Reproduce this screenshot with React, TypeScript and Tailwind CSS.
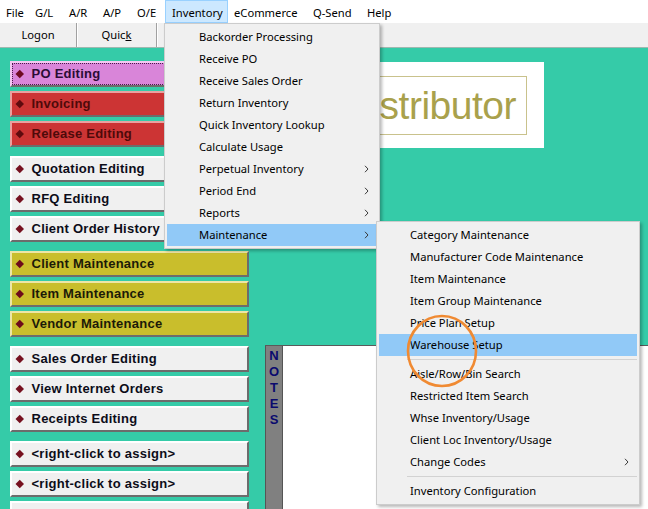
import React from "react";

type Tone = "pink" | "red" | "white" | "olive";

type Shortcut = { label: string; tone: Tone; focus?: boolean };

const shortcutGroups: Shortcut[][] = [
  [
    { label: "PO Editing", tone: "pink", focus: true },
    { label: "Invoicing", tone: "red" },
    { label: "Release Editing", tone: "red" },
  ],
  [
    { label: "Quotation Editing", tone: "white" },
    { label: "RFQ Editing", tone: "white" },
    { label: "Client Order History", tone: "white" },
  ],
  [
    { label: "Client Maintenance", tone: "olive" },
    { label: "Item Maintenance", tone: "olive" },
    { label: "Vendor Maintenance", tone: "olive" },
  ],
  [
    { label: "Sales Order Editing", tone: "white" },
    { label: "View Internet Orders", tone: "white" },
    { label: "Receipts Editing", tone: "white" },
  ],
  [
    { label: "<right-click to assign>", tone: "white" },
    { label: "<right-click to assign>", tone: "white" },
    { label: "", tone: "white" },
  ],
];

const toneClass: Record<Tone, string> = {
  pink: "bg-[#d985d9] text-[#2a0c34] border-t-[#f3c8f3] border-l-[#f3c8f3]",
  red: "bg-[#cc3434] text-[#4e0a0a] border-t-[#e9a0a0] border-l-[#e9a0a0]",
  white: "bg-[#f0f0f0] text-[#0c0c18] border-t-white border-l-white",
  olive: "bg-[#c9be2c] text-[#1c1a08] border-t-[#ece6a6] border-l-[#ece6a6]",
};

const diamondClass: Record<Tone, string> = {
  pink: "bg-[#6e0a22]",
  red: "bg-[#5e0a0e]",
  white: "bg-[#76101f]",
  olive: "bg-[#6e0a1a]",
};

const topMenu = [
  { label: "File", w: "w-[29px]" },
  { label: "G/L", w: "w-[34px]" },
  { label: "A/R", w: "w-[34px]" },
  { label: "A/P", w: "w-[34px]" },
  { label: "O/E", w: "w-[34px]" },
  { label: "Inventory", w: "w-[63px]", open: true },
  { label: "eCommerce", w: "w-[79px]" },
  { label: "Q-Send", w: "w-[54px]" },
  { label: "Help", w: "w-[40px]" },
];

type MenuEntry = { label?: string; sub?: boolean; active?: boolean; sep?: boolean };

const inventoryMenu: MenuEntry[] = [
  { label: "Backorder Processing" },
  { label: "Receive PO" },
  { label: "Receive Sales Order" },
  { label: "Return Inventory" },
  { label: "Quick Inventory Lookup" },
  { label: "Calculate Usage" },
  { label: "Perpetual Inventory", sub: true },
  { label: "Period End", sub: true },
  { label: "Reports", sub: true },
  { label: "Maintenance", sub: true, active: true },
];

const maintenanceMenu: MenuEntry[] = [
  { label: "Category Maintenance" },
  { label: "Manufacturer Code Maintenance" },
  { label: "Item Maintenance" },
  { label: "Item Group Maintenance" },
  { label: "Price Plan Setup" },
  { label: "Warehouse Setup", active: true },
  { sep: true },
  { label: "Aisle/Row/Bin Search" },
  { label: "Restricted Item Search" },
  { label: "Whse Inventory/Usage" },
  { label: "Client Loc Inventory/Usage" },
  { label: "Change Codes", sub: true },
  { sep: true },
  { label: "Inventory Configuration" },
];

function Chevron() {
  return (
    <svg width="5" height="8" viewBox="0 0 5 8" className="shrink-0">
      <path d="M1 0.8 L4 4 L1 7.2" fill="none" stroke="#3a3a3a" strokeWidth="1" />
    </svg>
  );
}

function DropMenu({
  items,
  textPad,
  className,
}: {
  items: MenuEntry[];
  textPad: string;
  className: string;
}) {
  return (
    <div
      className={`absolute border border-[#cccccc] bg-[#f0f0f0] p-[2px] shadow-[2px_2px_3px_rgba(0,0,0,0.28)] ${className}`}
    >
      {items.map((it, i) =>
        it.sep ? (
          <div key={i} className="flex h-[7px] items-center pl-[28px]">
            <div className="h-px flex-1 bg-[#d2d2d2]" />
          </div>
        ) : (
          <div
            key={i}
            className={`flex h-[22px] items-center justify-between ${textPad} pr-[8px] ${
              it.active ? "bg-[#91c9f7]" : ""
            }`}
          >
            <span className="whitespace-nowrap">{it.label}</span>
            {it.sub ? <Chevron /> : null}
          </div>
        )
      )}
    </div>
  );
}

function ShortcutButton({ item }: { item: Shortcut }) {
  return (
    <div
      className={`flex h-[26px] w-[239px] items-stretch border-2 border-b-[#6c6c6c] border-r-[#6c6c6c] ${toneClass[item.tone]}`}
    >
      <div
        className={`flex flex-1 items-center ${
          item.focus ? "border border-dotted border-[#4a1c4a]" : "border border-transparent"
        }`}
      >
        {item.label ? (
          <>
            <span
              className={`ml-[4px] mr-[9px] h-[5.5px] w-[5.5px] shrink-0 rotate-45 ${diamondClass[item.tone]}`}
            />
            <span className="whitespace-nowrap font-['Liberation_Sans',Arial,sans-serif] text-[13px] font-bold tracking-[0.25px]">
              {item.label}
            </span>
          </>
        ) : null}
      </div>
    </div>
  );
}

export default function App() {
  return (
    <div className="relative h-[509px] w-[648px] overflow-hidden bg-[#35cba8] font-['Noto_Sans','Open_Sans',sans-serif] text-[11.2px] text-black">
      {/* menu bar */}
      <div className="flex h-[23px] bg-white">
        {topMenu.map((m) => (
          <div
            key={m.label}
            className={`flex h-[23px] items-center pl-[6px] pt-[4px] ${m.w} ${
              m.open ? "border border-[#99d1ff] bg-[#cce8ff] pl-[5px] pt-[3px]" : ""
            }`}
          >
            {m.label}
          </div>
        ))}
      </div>

      {/* toolbar */}
      <div className="flex h-[25px] border-b border-[#9fb8b0] bg-[#f0f0f0]">
        <div className="flex w-[77px] items-center justify-center border-r border-[#a0a0a0] shadow-[1px_0_0_#ffffff]">
          Logon
        </div>
        <div className="flex w-[80px] items-center justify-center border-r border-[#a0a0a0] shadow-[1px_0_0_#ffffff]">
          Quic<span className="underline">k</span>
        </div>
      </div>

      {/* work area */}
      <div className="flex h-[461px]">
        <div className="flex flex-col gap-[9px] pl-[10px] pt-[13px]">
          {shortcutGroups.map((g, gi) => (
            <div key={gi} className="flex flex-col gap-[4px]">
              {g.map((b, bi) => (
                <ShortcutButton key={bi} item={b} />
              ))}
            </div>
          ))}
        </div>

        <div className="flex flex-1 flex-col">
          {/* company banner */}
          <div className="ml-[41px] mt-[14px] flex h-[86px] w-[254px] items-center justify-end bg-white pr-[17px]">
            <div className="flex h-[59px] w-[230px] items-center justify-end overflow-hidden border border-[#c9c28c] pr-[10px]">
              <span className="whitespace-nowrap font-['Liberation_Sans',Arial,sans-serif] text-[39px] leading-none tracking-[-0.5px] text-[#a9a14c]">
                Distributor
              </span>
            </div>
          </div>

          {/* notes panel */}
          <div className="ml-[16px] mt-[197px] flex flex-1 border-t border-[#5a5a5a] bg-white">
            <div className="flex w-[18px] flex-col items-center border-l border-r border-[#555555] bg-[#808080] pt-[2px] font-['Liberation_Sans',Arial,sans-serif] text-[13px] font-bold leading-[16px] text-[#0a0a6e]">
              <span>N</span>
              <span>O</span>
              <span>T</span>
              <span>E</span>
              <span>S</span>
            </div>
            <div className="flex-1" />
          </div>
        </div>
      </div>

      {/* open Inventory menu */}
      <DropMenu items={inventoryMenu} textPad="pl-[32px]" className="left-[164px] top-[23px] w-[216px]" />
      <DropMenu items={maintenanceMenu} textPad="pl-[31px]" className="left-[376px] top-[221px] w-[264px]" />

      {/* orange highlight ring */}
      <svg className="absolute left-[406px] top-[314px]" width="72" height="74" viewBox="0 0 72 74">
        <ellipse cx="36" cy="37" rx="34" ry="35" fill="none" stroke="#f08a32" strokeWidth="2.6" />
      </svg>
    </div>
  );
}
